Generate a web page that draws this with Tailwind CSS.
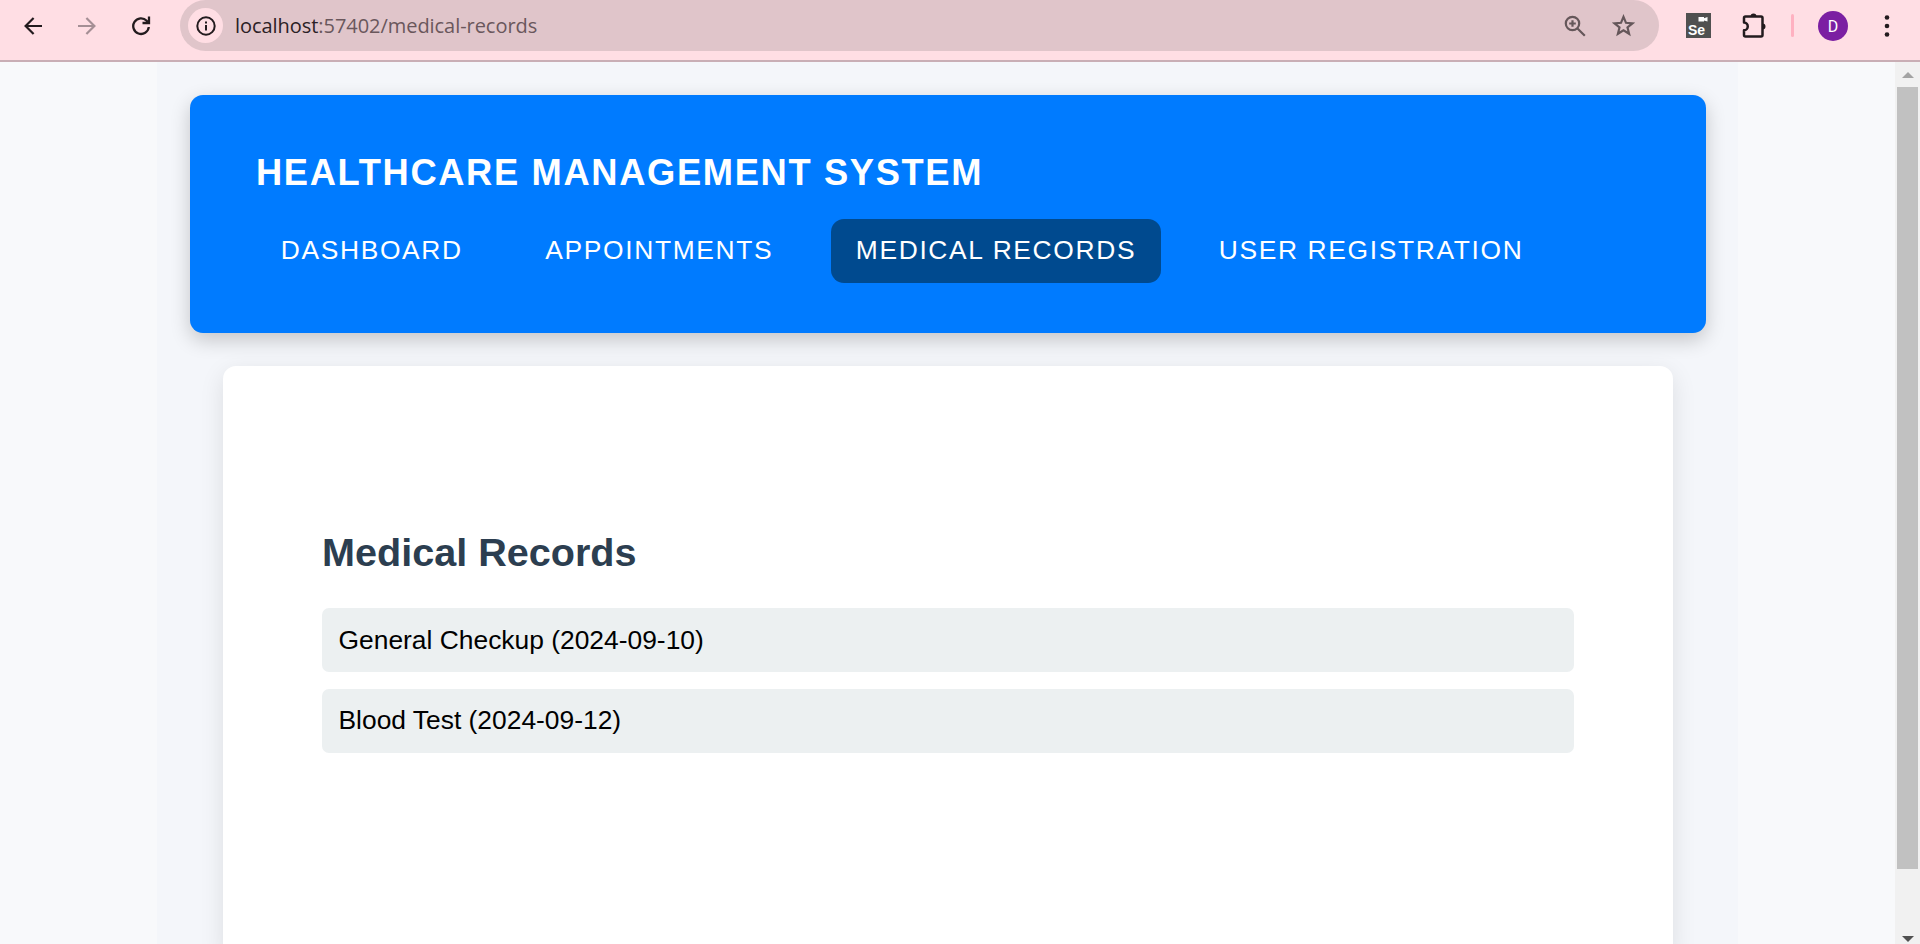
<!DOCTYPE html>
<html lang="en">
<head>
<meta charset="utf-8">
<title>Healthcare Management System</title>
<script src="https://cdn.jsdelivr.net/npm/@tailwindcss/browser@4"></script>
</head>
<body class="h-[944px] w-[1920px] overflow-hidden flex flex-col bg-[#f8f9fb] font-['Liberation_Sans',Arial,sans-serif]">
<div class="h-[62px] shrink-0 flex items-start bg-[#ffdee4] border-b-2 border-[#c9aeb5]">
  <div class="h-[51px] w-[180px] shrink-0 flex items-center">
    <svg class="ml-[24px] w-[18px] h-[18px]" viewBox="0 0 18 18" fill="none" stroke="#231b1e" stroke-width="2.2"><path d="M18 9H1.8M9.6 1 1.6 9l8 8"/></svg>
    <svg class="ml-[36px] w-[18px] h-[18px]" viewBox="0 0 18 18" fill="none" stroke="#a58f95" stroke-width="2.2"><path d="M0 9h16.2M8.4 1l8 8-8 8"/></svg>
    <svg class="ml-[35px] w-[20px] h-[20px]" viewBox="0 0 20 20" fill="none" stroke="#231b1e" stroke-width="2.3"><path d="M17.8 11A7.8 7.8 0 1 1 15.700 4.800L17.500 6.600M18 .5V7h-6.500"/></svg>
  </div>
  <div class="h-[51px] w-[1479px] shrink-0 flex items-center rounded-full bg-[#e0c5ca]">
    <div class="ml-[8px] size-[35px] rounded-full bg-[#ffdee4] flex items-center justify-center">
      <svg class="size-[20px]" viewBox="0 0 20 20" fill="none" stroke="#231b1e" stroke-width="2"><circle cx="10" cy="10" r="8.7"/><path d="M10 9v5.500M10 5.400v2.100"/></svg>
    </div>
    <div class="ml-[12px] text-[20px] leading-[26px] tracking-[-0.050px] font-['Open_Sans','Noto_Sans',sans-serif] text-[#6a575c] whitespace-nowrap"><span class="text-[#2b2125]">localhost</span>:57402/medical-records</div>
    <svg class="ml-auto mr-[26px] size-[22px]" viewBox="0 0 22 22" fill="none" stroke="#65575a" stroke-width="2.2"><circle cx="8.5" cy="8.5" r="6.7"/><path d="M13.500 13.500l7.300 7.300M8.500 5.200v6.600M5.200 8.500h6.600"/></svg>
    <svg class="mr-[24px] size-[23px]" viewBox="0 0 23 23" fill="none" stroke="#65575a" stroke-width="2.2"><path d="M11.500 2.800l2.500 6 6.500.5-5 4.200 1.600 6.300-5.600-3.400-5.600 3.400 1.600-6.300-5-4.200 6.500-.5z"/></svg>
  </div>
  <div class="h-[51px] flex items-center">
    <svg class="ml-[27px] size-[25px]" viewBox="0 0 25 25"><path fill="#505050" d="M0 0h25v25H0z"/><path fill="#fff" d="M12.500 4H18v1.200l3.500-1.200v4.500L18 7.500v1h-5.500z"/><text x="2" y="21.500" textLength="17" font-family="Liberation Sans" font-weight="bold" font-size="14" fill="#fff">Se</text></svg>
    <svg class="ml-[30px] -mt-[2px] w-[26px] h-[26px]" viewBox="0 0 26 26"><path fill="none" stroke="#231b1e" stroke-width="2.5" stroke-linejoin="round" d="M4.500 4.500h15.500q1.500 0 1.500 1.500v17q0 1.500-1.500 1.500H4.500Q3 24.500 3 23v-4.800c5 0 5-7.600 0-7.600V6q0-1.500 1.500-1.500z"/><path fill="#231b1e" d="M9.500 4.500a3 3 0 0 1 6 0zM21.500 11.500a3 3 0 0 1 0 6z"/></svg>
    <div class="ml-[24px] w-[3px] h-[23px] rounded-full bg-[#ffb1c1]"></div>
    <div class="ml-[24px] size-[30px] rounded-full bg-[#7b1fa2] text-white text-[16px] leading-[31px] text-center font-[Roboto,sans-serif]">D</div>
    <svg class="ml-[36px] w-[6px] h-[22px]" viewBox="0 0 6 22" fill="#231b1e"><circle cx="3" cy="2.5" r="2.3"/><circle cx="3" cy="11" r="2.3"/><circle cx="3" cy="19.5" r="2.3"/></svg>
  </div>
</div>
<div class="flex h-[882px]">
  <div class="w-[1895px] overflow-hidden flex justify-center">
    <div class="w-[1581px] bg-[#f4f6fa] pt-[33px] px-[33px]">
      <header class="h-[238px] w-[1516px] rounded-[13px] bg-[#007bff] text-white pl-[66px] pt-[55px] shadow-[0_7px_20px_rgba(0,0,0,0.2)]">
        <h1 class="text-[36.300px] leading-[46px] font-bold tracking-[1.650px] whitespace-nowrap">HEALTHCARE MANAGEMENT SYSTEM</h1>
        <nav class="mt-[23px] flex gap-[33px] text-[26.400px] leading-[62px] tracking-[1.650px] whitespace-nowrap">
          <a class="px-[24.750px]">DASHBOARD</a>
          <a class="px-[24.750px]">APPOINTMENTS</a>
          <a class="px-[24.750px] h-[64px] rounded-[13px] bg-[#004a8f]">MEDICAL RECORDS</a>
          <a class="px-[24.750px]">USER REGISTRATION</a>
        </nav>
      </header>
      <main class="mt-[33px] ml-[33px] w-[1450px] h-[590px] rounded-[13px] bg-white pt-[162px] px-[99px] shadow-[0_7px_25px_rgba(0,0,0,0.1)]">
        <h2 class="text-[39.600px] leading-[48px] font-bold text-[#2c3e50]">Medical Records</h2>
        <ul class="mt-[32px] flex flex-col gap-[17px] text-[26.400px] text-black">
          <li class="h-[64px] leading-[64px] rounded-[7px] bg-[#ecf0f1] pl-[16.500px]">General Checkup (2024-09-10)</li>
          <li class="h-[64px] leading-[62px] rounded-[7px] bg-[#ecf0f1] pl-[16.500px]">Blood Test (2024-09-12)</li>
        </ul>
      </main>
    </div>
  </div>
  <div class="w-[25px] bg-[#f1f1f1] flex flex-col items-center">
    <svg class="mt-[10px] w-[12px] h-[6px]" viewBox="0 0 12 6"><path fill="#a3a3a3" d="M6 0l6 6H0z"/></svg>
    <div class="mt-[9px] w-[21px] h-[782px] bg-[#c1c1c1]"></div>
    <svg class="mt-[67px] w-[12px] h-[6px]" viewBox="0 0 12 6"><path fill="#505050" d="M0 0h12L6 6z"/></svg>
  </div>
</div>
</body>
</html>
